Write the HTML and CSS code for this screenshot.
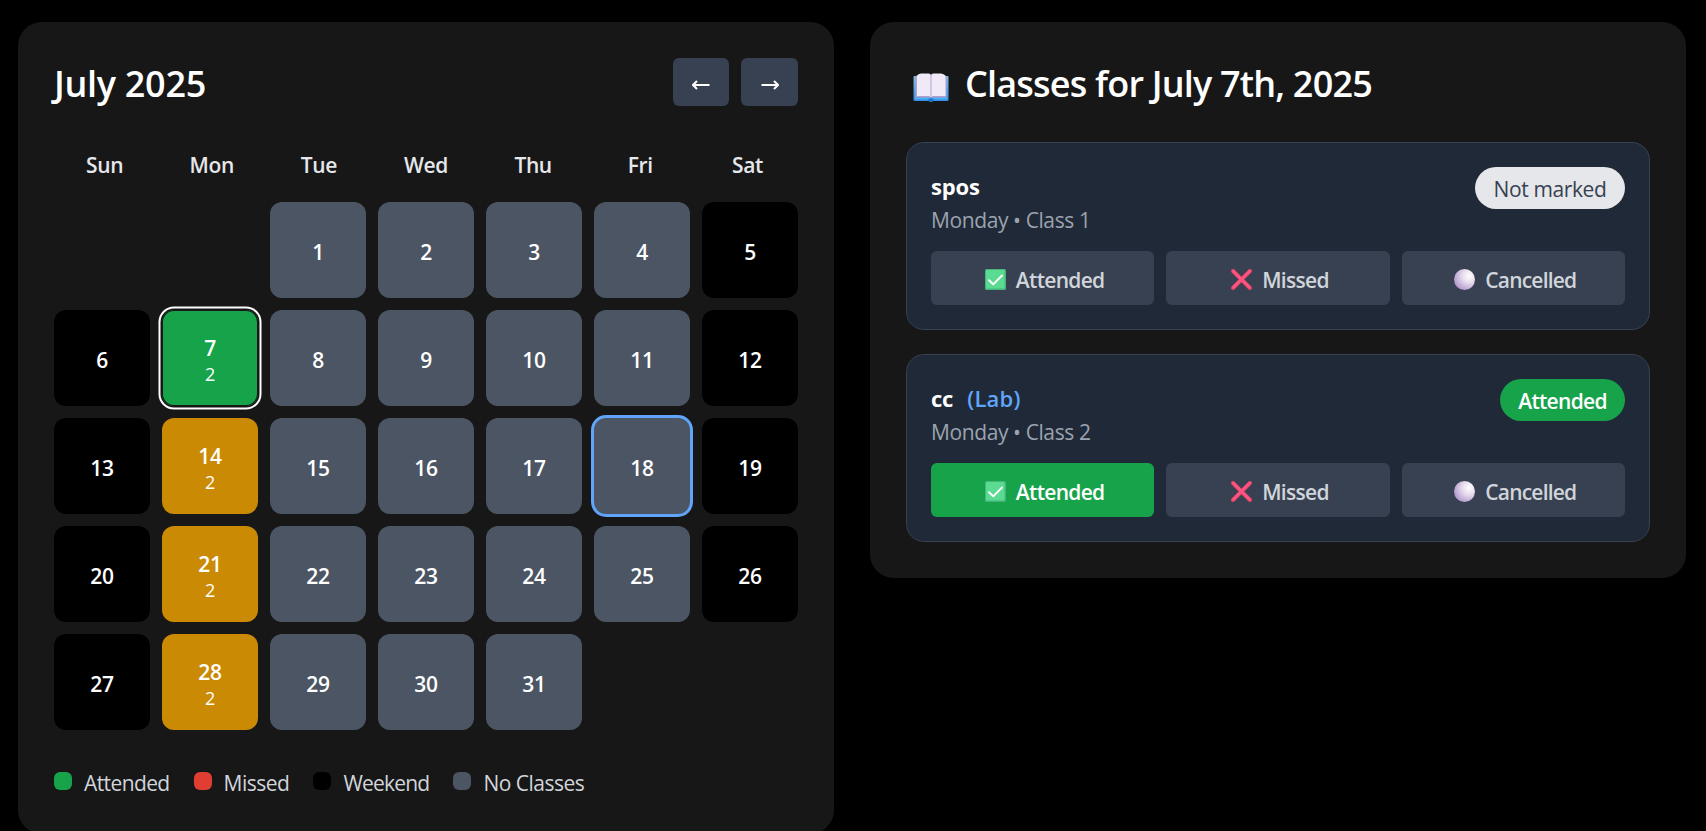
FILE: index.html
```
<!DOCTYPE html>
<html lang="en">
<head>
<meta charset="utf-8">
<title>Attendance</title>
<link rel="stylesheet" href="styles.css">
</head>
<body>
<svg class="defs" width="0" height="0" aria-hidden="true">
  <defs>
    <radialGradient id="ball" cx="0.72" cy="0.33" r="0.75">
      <stop offset="0" stop-color="#fffdff"/>
      <stop offset="0.4" stop-color="#e9e0ef"/>
      <stop offset="1" stop-color="#b49ace"/>
    </radialGradient>
    <linearGradient id="cover" x1="0" y1="0" x2="0" y2="1">
      <stop offset="0" stop-color="#7fb9dc"/>
      <stop offset="1" stop-color="#2f8fe8"/>
    </linearGradient>
    <symbol id="check" viewBox="0 0 21 21">
      <rect width="21" height="21" rx="1.5" fill="#46b57c"/>
      <rect x="1" y="1" width="18.5" height="18.5" rx="1" fill="#5bdb92"/>
      <path d="M4 11.2l4.2 4.1L17 6.5" fill="none" stroke="#fff" stroke-width="1.9" stroke-linecap="round" stroke-linejoin="round"/>
    </symbol>
    <symbol id="cross" viewBox="0 0 21 21">
      <path d="M2 2l17 17M19 2L2 19" fill="none" stroke="#e04560" stroke-width="4" stroke-linecap="round"/>
      <path d="M2.3 2.2l16 16M18.5 2.2l-16 16" fill="none" stroke="#ff5384" stroke-width="2.8" stroke-linecap="round"/>
    </symbol>
    <symbol id="circle" viewBox="0 0 21 21">
      <circle cx="10.5" cy="10.5" r="10.5" fill="url(#ball)"/>
    </symbol>
  </defs>
</svg>
<main class="page">
  <section class="panel calendar">
    <header class="cal-head">
      <h2 class="title month">July 2025</h2>
      <div class="nav">
        <button class="nav-btn prev" aria-label="Previous month"><svg width="18" height="10" viewBox="0 0 18 10"><path d="M1 5h16.5M5 1L1 5l4 4" /></svg></button>
        <button class="nav-btn next" aria-label="Next month"><svg width="18" height="10" viewBox="0 0 18 10"><path d="M.5 5H17M13 1l4 4-4 4" /></svg></button>
      </div>
    </header>
    <div class="weekdays"><span>Sun</span><span>Mon</span><span>Tue</span><span>Wed</span><span>Thu</span><span>Fri</span><span>Sat</span></div>
    <div class="days">
      <div></div><div></div>
      <div class="day">1</div><div class="day">2</div><div class="day">3</div><div class="day">4</div><div class="day off">5</div>
      <div class="day off">6</div><div class="day attended selected">7<small>2</small></div><div class="day">8</div><div class="day">9</div><div class="day">10</div><div class="day">11</div><div class="day off">12</div>
      <div class="day off">13</div><div class="day partial">14<small>2</small></div><div class="day">15</div><div class="day">16</div><div class="day">17</div><div class="day today">18</div><div class="day off">19</div>
      <div class="day off">20</div><div class="day partial">21<small>2</small></div><div class="day">22</div><div class="day">23</div><div class="day">24</div><div class="day">25</div><div class="day off">26</div>
      <div class="day off">27</div><div class="day partial">28<small>2</small></div><div class="day">29</div><div class="day">30</div><div class="day">31</div>
    </div>
    <div class="legend">
      <span class="key key-attended"><i class="swatch attended"></i>Attended</span>
      <span class="key key-missed"><i class="swatch missed"></i>Missed</span>
      <span class="key key-weekend"><i class="swatch off"></i>Weekend</span>
      <span class="key"><i class="swatch none"></i>No Classes</span>
    </div>
  </section>
  <section class="panel classes">
    <h2 class="title class-title">
      <svg class="book" width="36" height="29" viewBox="0 0 36 29">
        <path d="M1.5 3H34.500Q35.500 3 35.500 4V26.500Q35.500 28 34 28H20Q18 30 16 28H2Q.5 28 .5 26.500V4Q.5 3 1.500 3z" fill="url(#cover)"/>
        <path d="M2 25.500H34" stroke="#4db2f5" stroke-width="1.600"/>
        <path d="M15.700 25.500h4.600v2.600q-2.300 1.800-4.600 0z" fill="#2471c8"/>
        <path d="M2.500 4Q3.500 2 5 1.800V22.500H31V1.800Q32.500 2 33.500 4V24.500H2.500z" fill="#b3a1cd"/>
        <path d="M4 3Q5 .5 8 .5H15.500Q18 .5 18 2.500Q18 .5 20.500 .5H28Q31 .5 32.500 3V23H20Q18 23 18 24.500Q18 23 16 23H4z" fill="#f0eaf8"/>
        <path d="M18 2V24" stroke="#cfc3e2" stroke-width="1.800"/>
      </svg>
      <span>Classes for July 7th, 2025</span>
    </h2>
    <article class="card">
      <div class="card-head">
        <div><h3 class="name">spos</h3><p class="meta">Monday • Class 1</p></div>
        <span class="pill unmarked">Not marked</span>
      </div>
      <div class="actions">
        <button class="action"><svg width="21" height="21"><use href="#check"/></svg><span class="t-att">Attended</span></button>
        <button class="action"><svg width="21" height="21"><use href="#cross"/></svg><span class="t-mis">Missed</span></button>
        <button class="action"><svg width="21" height="21"><use href="#circle"/></svg><span class="t-can">Cancelled</span></button>
      </div>
    </article>
    <article class="card">
      <div class="card-head">
        <div><h3 class="name">cc<span class="lab">(Lab)</span></h3><p class="meta">Monday • Class 2</p></div>
        <span class="pill done">Attended</span>
      </div>
      <div class="actions">
        <button class="action active"><svg width="21" height="21"><use href="#check"/></svg><span class="t-att">Attended</span></button>
        <button class="action"><svg width="21" height="21"><use href="#cross"/></svg><span class="t-mis">Missed</span></button>
        <button class="action"><svg width="21" height="21"><use href="#circle"/></svg><span class="t-can">Cancelled</span></button>
      </div>
    </article>
  </section>
</main>
</body>
</html>
```
FILE: styles.css
```
* { box-sizing: border-box; margin: 0; padding: 0; }
html, body { height: 831px; overflow: hidden; }
body { background: #000; color: #fff; font-family: "Open Sans", "Noto Sans", sans-serif; font-size: 21px; }
button { border: 0; font: inherit; color: inherit; }
svg { display: block; flex: none; }
.defs { position: absolute; }
.page { display: grid; grid-template-columns: 816px 816px; gap: 36px; padding: 22px 0 0 18px; align-items: start; }
.panel { background: #171717; border-radius: 24px; padding: 36px; }
.calendar { height: 812px; }
.title { font-size: 36px; font-weight: 600; line-height: 51px; letter-spacing: -0.8px; white-space: nowrap; }
.month { letter-spacing: -0.3px; }
.cal-head { display: flex; justify-content: space-between; height: 48px; }
.nav { display: flex; gap: 12px; }
.nav-btn { height: 48px; border-radius: 6px; background: #374151; display: flex; align-items: center; justify-content: center; padding-top: 6px; }
.prev { width: 56px; }
.next { width: 57px; }
.nav-btn path { fill: none; stroke: #fff; stroke-width: 2; }
.weekdays { display: grid; grid-template-columns: repeat(7, 1fr); gap: 6px; margin-top: 36px; height: 60px; padding-top: 8px; text-align: center; font-weight: 600; color: #e5e7eb; line-height: 30px; letter-spacing: -0.4px; }
.days { display: grid; grid-template-columns: repeat(7, 96px); grid-auto-rows: 96px; gap: 12px; }
.day { display: flex; flex-direction: column; align-items: center; justify-content: center; border-radius: 12px; background: #4b5563; font-weight: 600; line-height: 30px; letter-spacing: -0.3px; padding-top: 4px; }
.day small { font-size: 18px; font-weight: 400; line-height: 24px; margin-top: -1px; }
.day:has(small) { padding-top: 2px; }
.off { background: #000; }
.attended { background: #16a34a; }
.missed { background: #e23d32; }
.partial { background: #ca8a04; }
.none { background: #4b5563; }
.selected { box-shadow: inset 0 0 0 1px #171717, 0 0 0 1.500px #171717, 0 0 0 3.500px #fff; }
.today { box-shadow: 0 0 0 3px #60a5fa; }
.legend { display: flex; gap: 24px; margin-top: 36px; height: 30px; color: #d1d5db; letter-spacing: -0.5px; white-space: nowrap; }
.key { display: flex; gap: 12px; line-height: 34px; }
.key-attended { letter-spacing: -0.6px; }
.key-weekend { letter-spacing: -0.8px; }
.swatch { width: 18px; height: 18px; border-radius: 6px; margin-top: 6px; }
.class-title { display: flex; height: 48px; margin-bottom: 36px; padding-left: 7px; gap: 16px; }
.book { margin-top: 15px; }
.card { height: 188px; border: 1px solid #374151; border-radius: 18px; background: #1f2937; padding: 24px; }
.card + .card { margin-top: 24px; }
.card-head { display: flex; justify-content: space-between; align-items: flex-start; height: 84px; }
.name { font-size: 22px; font-weight: 700; line-height: 38px; height: 38px; letter-spacing: -0.2px; }
.lab { color: #60a5fa; margin-left: 14px; font-weight: 600; letter-spacing: 0.2px; }
.meta { color: #9ca3af; line-height: 30px; letter-spacing: -0.4px; }
.pill { height: 42px; border-radius: 21px; line-height: 45px; text-align: center; font-weight: 600; letter-spacing: -0.7px; }
.unmarked { width: 150px; background: #e5e7eb; color: #374151; font-weight: 500; letter-spacing: -0.4px; }
.done { width: 125px; background: #16a34a; }
.actions { display: grid; grid-template-columns: repeat(3, 1fr); gap: 12px; }
.action { height: 54px; border-radius: 6px; background: #374151; color: #d1d5db; font-weight: 600; display: flex; align-items: center; justify-content: center; gap: 10px; padding: 3px 0 0 4px; letter-spacing: -0.7px; }
.t-can { letter-spacing: -0.8px; }
.active { background: #16a34a; color: #fff; }
```
